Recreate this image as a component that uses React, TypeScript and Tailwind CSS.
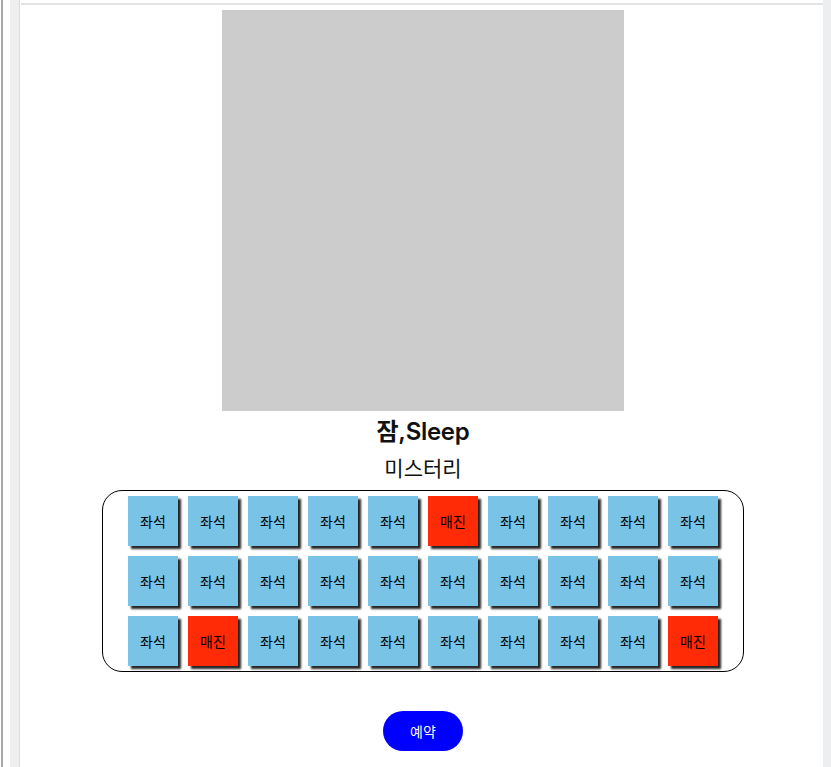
const SOLD = new Set(['0-5', '2-1', '2-9'])

function Seat({ sold }: { sold: boolean }) {
  return (
    <div
      className={`m-[5px] flex h-[50px] w-[50px] items-center justify-center text-[14px] text-black shadow-[3px_3px_2px_rgba(0,0,0,0.85)] ${
        sold ? 'bg-[#ff2a06]' : 'bg-[#79c3e6]'
      }`}
    >
      {sold ? '매진' : '좌석'}
    </div>
  )
}

export default function App() {
  return (
    <div
      className="flex h-[767px] w-[831px] overflow-hidden bg-white"
      style={{ fontFamily: 'Inter, "Noto Sans CJK KR", sans-serif' }}
    >
      {/* left frame */}
      <div className="flex h-full w-[21px] shrink-0">
        <div className="w-px" />
        <div className="w-[2px] bg-[#a8a8a8]" />
        <div className="w-[7px] bg-white" />
        <div className="w-[10px] border-r border-[#dcdcdc] bg-[#eef0f0]" />
      </div>

      {/* page */}
      <div className="flex h-full w-[802px] shrink-0 flex-col">
        <div className="mt-[3px] h-[2px] bg-[#e2e4e4]" />
        <div className="flex flex-col items-center pl-[2px]">
          <div className="mt-[5px] h-[401px] w-[402px] bg-[#cccccc]" />
          <div className="mt-[5px] text-[24px] font-semibold leading-[32px] tracking-[-0.3px] text-[#111]">잠,Sleep</div>
          <div className="mt-[6px] text-[21px] leading-[30px] text-[#111]">미스터리</div>

          <div className="mt-[6px] w-[642px] rounded-[20px] border border-black px-[20px]">
            {[0, 1, 2].map((r) => (
              <div key={r} className="flex justify-center">
                {Array.from({ length: 10 }).map((_, c) => (
                  <Seat key={c} sold={SOLD.has(`${r}-${c}`)} />
                ))}
              </div>
            ))}
          </div>

          <button className="mt-[39px] h-[40px] w-[80px] rounded-full bg-[#0000ff] text-[14px] text-white">
            예약
          </button>
        </div>
      </div>

      {/* right frame */}
      <div className="h-full w-[8px] shrink-0 bg-[#eceef0]" />
    </div>
  )
}
